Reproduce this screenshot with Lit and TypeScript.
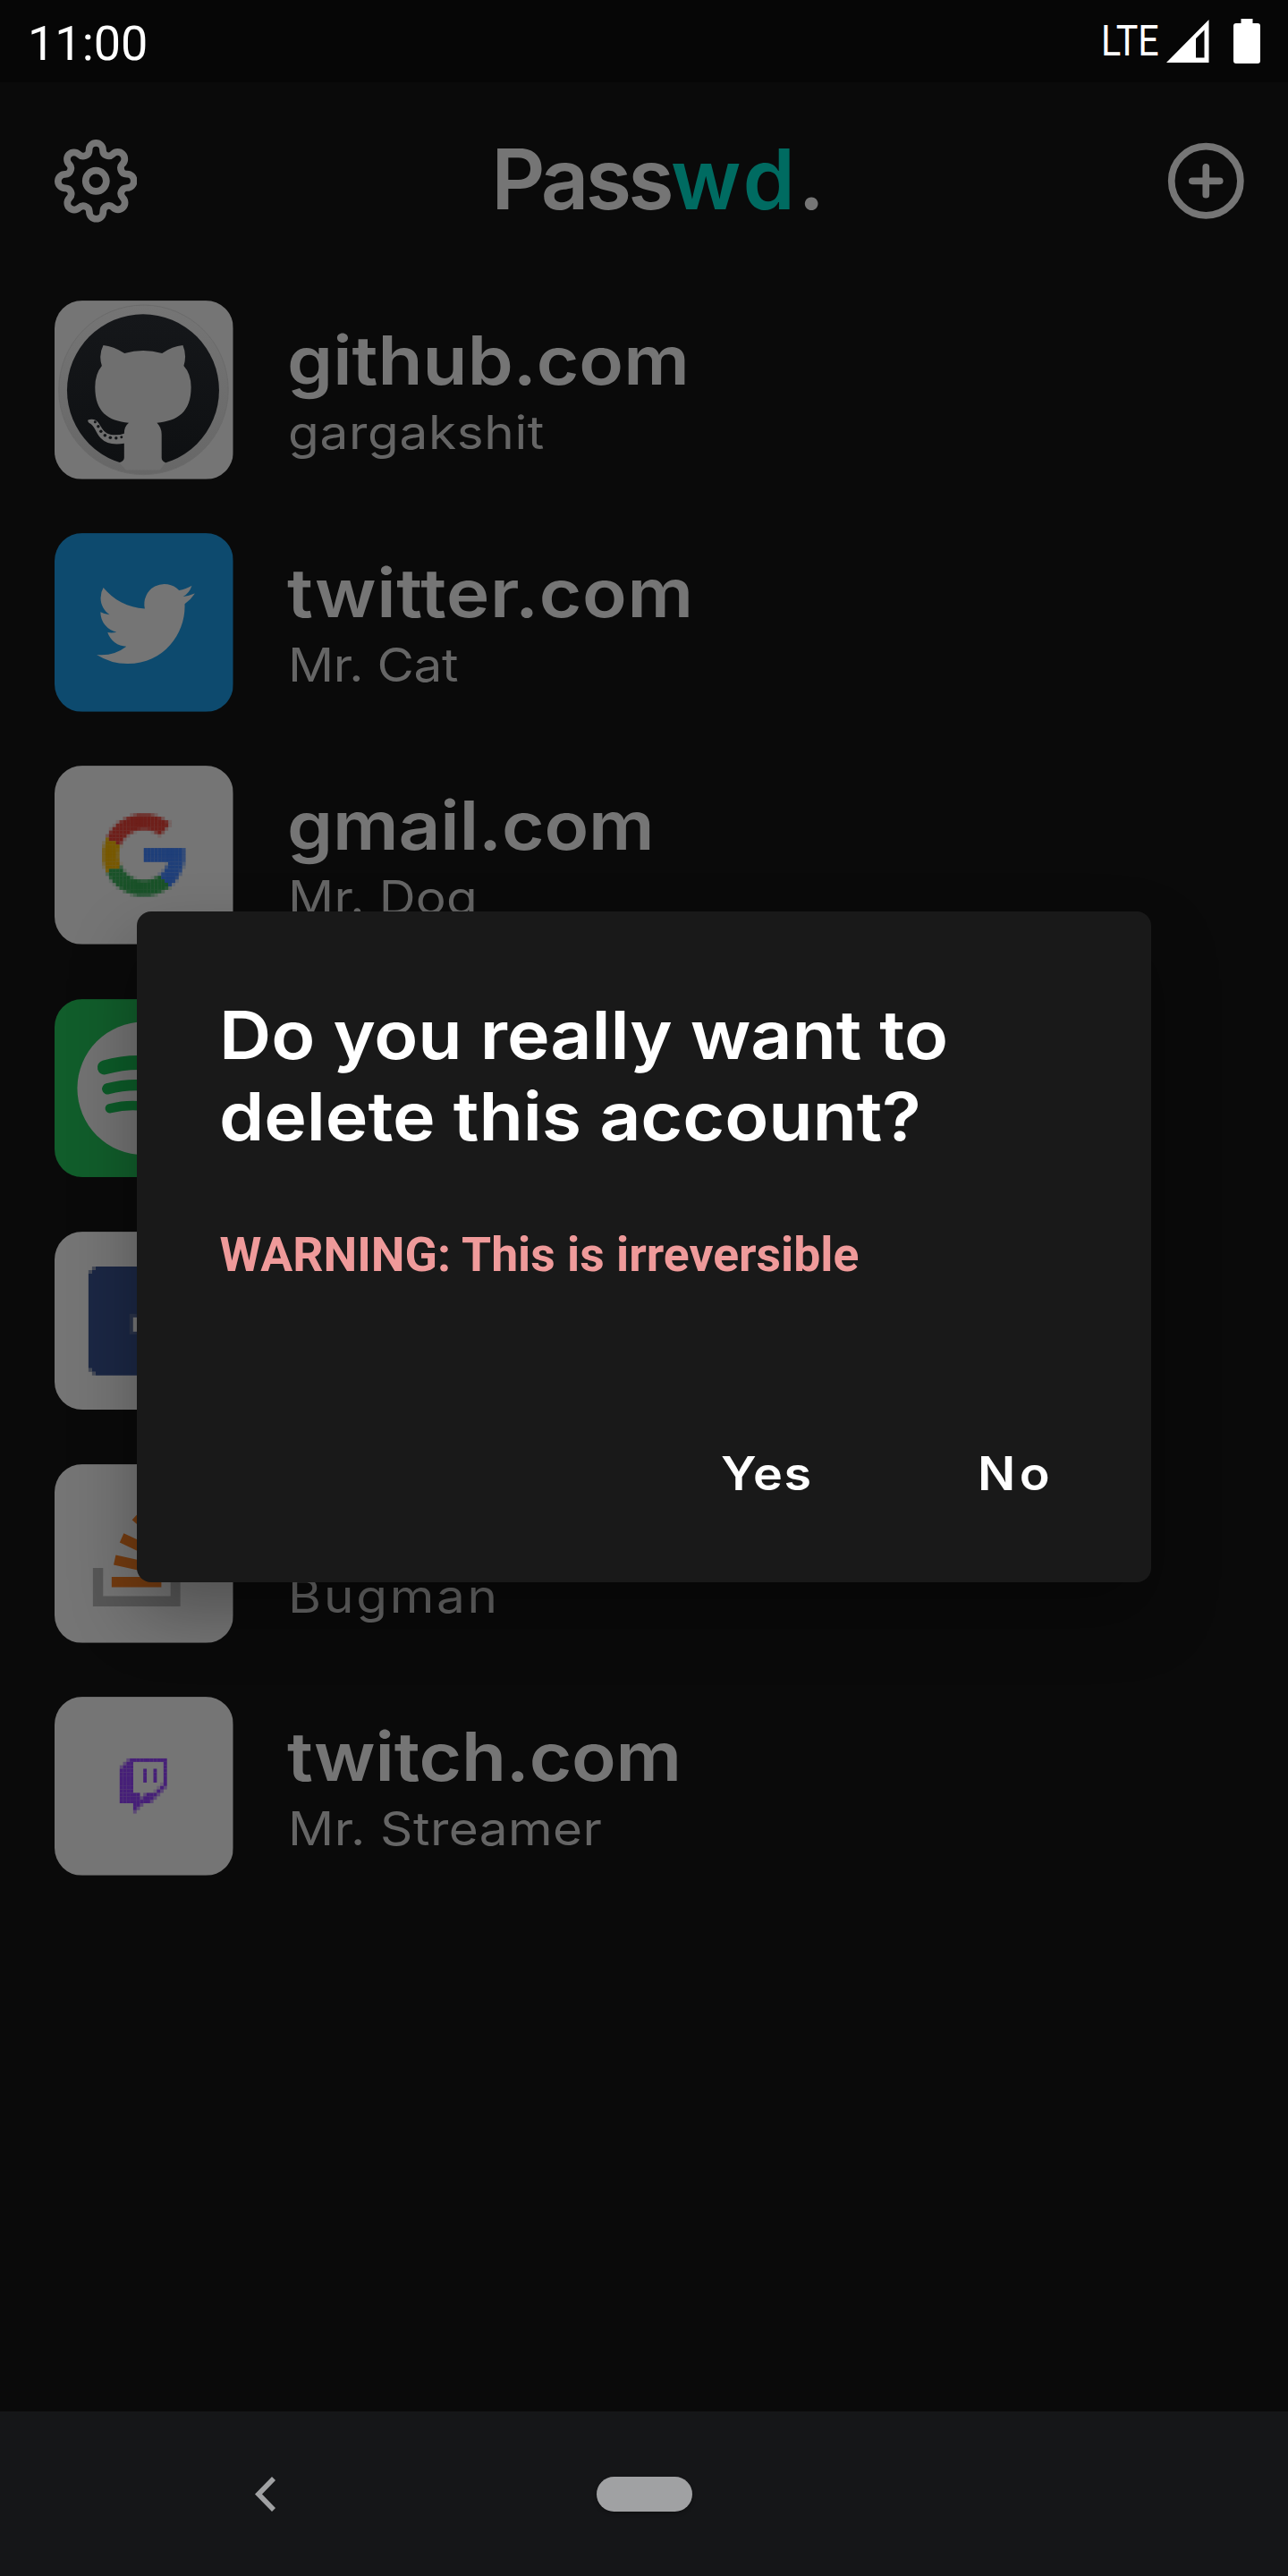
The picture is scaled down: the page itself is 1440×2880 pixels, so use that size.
import { LitElement, html, css, svg } from "lit";
import { customElement, property } from "lit/decorators.js";

interface Account {
  icon: string;
  site?: string;
  user?: string;
  siteTracking?: number;
  userTracking?: number;
}

const ACCOUNTS: Account[] = [
  { icon: "github", site: "github.com", user: "gargakshit", siteTracking: 0, userTracking: 0.6 },
  { icon: "twitter", site: "twitter.com", user: "Mr. Cat", siteTracking: 0.6, userTracking: -0.4 },
  { icon: "google", site: "gmail.com", user: "Mr. Dog", siteTracking: -0.1, userTracking: 0.1 },
  { icon: "spotify" },
  { icon: "facebook" },
  { icon: "stack", user: "Bugman", userTracking: 2.5 },
  { icon: "twitch", site: "twitch.com", user: "Mr. Streamer", siteTracking: -0.2, userTracking: 0.4 },
];

/** Which colour the Google "G" has at a point, with the mark centred on 0,0. */
function googleColour(x: number, y: number): string | null {
  const r = Math.hypot(x, y);
  if (x >= 0 && y >= -8 && y <= 8 && r <= 46) return "#1f3f79";
  if (r > 46 || r < 28.5) return null;
  const a = (Math.atan2(-y, x) * 180) / Math.PI;
  if (a >= 50 && a < 155) return "#6e1f1a";
  if (a >= 155 || a < -155) return "#775800";
  if (a < -52) return "#1a5229";
  if (a < 0) return "#1f3f79";
  return null;
}

/** Low-resolution favicon rendering of the G: one rect for each covered cell. */
function googlePixels() {
  const cell = 3.9;
  const cells = [];
  for (let row = -12; row < 12; row++) {
    for (let col = -12; col < 12; col++) {
      const hits = new Map<string, number>();
      let total = 0;
      for (let i = 0; i < 16; i++) {
        const c = googleColour((col + ((i % 4) + 0.5) / 4) * cell, (row + (Math.floor(i / 4) + 0.5) / 4) * cell);
        if (c) {
          hits.set(c, (hits.get(c) ?? 0) + 1);
          total++;
        }
      }
      if (!total) continue;
      const fill = [...hits.entries()].sort((a, b) => b[1] - a[1])[0][0];
      cells.push(svg`<rect x=${100 + col * cell} y=${100 + row * cell} width=${cell + 0.15} height=${cell + 0.15} fill=${fill} fill-opacity=${total / 16}></rect>`);
    }
  }
  return cells;
}

const TWITCH_BITMAP = [
  "..+###########",
  ".+##.........#",
  "+###.........#",
  "####...#..#..#",
  "####...#..#..#",
  "####...#..#..#",
  "####...#..#..#",
  "####........-#",
  "####.......-#+",
  "####......-#+.",
  "######.+###+..",
  "######+###+...",
  "#########+....",
  "....##+.......",
  "....#+........",
  "....+.........",
];

function twitchPixels() {
  const alpha: Record<string, number> = { "#": 1, "+": 0.5, "-": 0.25 };
  return TWITCH_BITMAP.flatMap((line, row) =>
    [...line].map((ch, col) =>
      alpha[ch]
        ? svg`<rect x=${73 + col * 3.78} y=${69 + row * 3.86} width="3.85" height="3.92" fill="#461f78" fill-opacity=${alpha[ch]}></rect>`
        : null
    )
  );
}

const LOGOS: Record<string, unknown> = {
  github: svg`
    <defs>
      <linearGradient id="gh" x1="0" y1="0" x2="0" y2="1">
        <stop offset="0" stop-color="#757575"></stop><stop offset="1" stop-color="#676767"></stop>
      </linearGradient>
      <linearGradient id="ink" x1="0" y1="0" x2="0" y2="1">
        <stop offset="0" stop-color="#15171a"></stop><stop offset="1" stop-color="#0e1012"></stop>
      </linearGradient>
    </defs>
    <rect width="200" height="200" fill="#757575"></rect>
    <circle cx="99.7" cy="100" r="95" fill="url(#gh)" stroke="#6a6a6a" stroke-width="1"></circle>
    <circle cx="99.2" cy="100.5" r="85.2" fill="url(#ink)"></circle>
    <path fill="#6f6f6f" d="M54.6 50Q66 51 78.4 59Q99.2 53 120.5 59Q132 51 143.8 50Q148.5 61 144.8 73Q153 82 153 97C153 125 138 135 114.7 137Q120 142 120 150V176Q120 180 124.500 181.500L118 190H80L72.500 181.500Q78 180 78 176V160Q60 163 51.700 154C46 148 45 140 38.500 137Q35 133 41 133C53 132 50 150 66 150.500Q73 151 78 149Q78 141 83.200 137C60 135 45.400 125 45.400 97Q45.400 82 53 73Q49 61 54.600 50Z"></path>
    <g fill="#131517">
      <circle cx="45.500" cy="136" r="1.500"></circle><circle cx="49" cy="141" r="1.700"></circle><circle cx="52" cy="146.500" r="1.700"></circle>
      <circle cx="56.500" cy="151" r="1.800"></circle><circle cx="62.500" cy="153.500" r="1.800"></circle><circle cx="69" cy="154" r="1.700"></circle><circle cx="75" cy="153" r="1.500"></circle>
    </g>`,
  twitter: svg`
    <rect width="200" height="200" fill="#0d4a6e"></rect>
    <path transform="translate(47.2 46.7) scale(4.58)" fill="#757575" d="M23.953 4.57a10 10 0 01-2.825.775 4.958 4.958 0 002.163-2.723c-.951.555-2.005.959-3.127 1.184a4.92 4.92 0 00-8.384 4.482C7.69 8.095 4.067 6.13 1.64 3.162a4.822 4.822 0 00-.666 2.475c0 1.71.87 3.213 2.188 4.096a4.904 4.904 0 01-2.228-.616v.06a4.923 4.923 0 003.946 4.827 4.996 4.996 0 01-2.212.085 4.936 4.936 0 004.604 3.417 9.867 9.867 0 01-6.102 2.105c-.39 0-.779-.023-1.17-.067a13.995 13.995 0 007.557 2.209c9.053 0 13.998-7.496 13.998-13.985 0-.21 0-.42-.015-.63A9.935 9.935 0 0024 4.59z"></path>`,
  google: svg`<rect width="200" height="200" fill="#757575"></rect>${googlePixels()}`,
  spotify: svg`
    <rect width="200" height="200" fill="#115d2b"></rect>
    <circle cx="100" cy="100" r="74.5" fill="#727272"></circle>
    <g fill="none" stroke="#0c5a28" stroke-linecap="round">
      <path d="M56 76.5Q80 69.5 106 71.5Q128 75 146 88" stroke-width="16"></path>
      <path d="M59.5 100.500Q82 94.500 104 97Q124 101 140 112" stroke-width="12.500"></path>
      <path d="M62 122.500Q82 117.500 100 120Q118 123 132 132" stroke-width="10.500"></path>
    </g>`,
  facebook: svg`
    <rect width="200" height="200" fill="#757575"></rect>
    <path d="M46 39H154V43H158V47H162V153H158V157H154V161H46V157H42V153H38V47H42V43H46Z" fill="#1b2744"></path>
    <path d="M42 39h4v4h-4zM38 43h4v4h-4zM38 153h4v4h-4zM42 157h4v4h-4z" fill="#454a57"></path>
    <rect x="84" y="92" width="8" height="23" fill="#2a3349"></rect>
    <rect x="88" y="96" width="60" height="16" fill="#757575"></rect>`,
  stack: svg`
    <rect width="200" height="200" fill="#757575"></rect>
    <path d="M43 116.3H54.4V147.7H130V116.3H141V159.3H43Z" fill="#575757"></path>
    <g fill="#733b10">
      <path d="M64 126.300H119.700V137.700H64Z"></path>
      <path d="M68.600 101.700L122 113.500L119.500 124.500L66.200 112.700Z"></path>
      <path d="M77.600 77.300L127 100.500L122 111L73 87.700Z"></path>
      <path d="M92 56.700L134 89L127 98L86.900 62.300Z"></path>
    </g>`,
  twitch: svg`<rect width="200" height="200" fill="#757575"></rect>${twitchPixels()}`,
};

@customElement("status-bar")
class StatusBar extends LitElement {
  static styles = css`
    :host { display: flex; flex: none; box-sizing: border-box; height: 92px; padding: 0 31px; background: #060606; color: #fff; justify-content: space-between; font-family: Roboto, sans-serif; }
    .time { font-size: 54px; line-height: 97px; }
    .right { display: flex; }
    .lte { width: 72px; font-size: 47.5px; line-height: 92px; transform: scaleX(0.867); transform-origin: 0 50%; white-space: nowrap; }
    svg { display: block; }
  `;
  render() {
    return html`
      <span class="time">11:00</span>
      <div class="right">
        <span class="lte">LTE</span>
        <svg width="106" height="92" viewBox="1303 0 106 92" fill="#fff">
          <path fill-rule="evenodd" d="M1304 70L1351.5 22V70ZM1337 43V64.5H1346.5V33.5Z"></path>
          <path d="M1387.5 21h13v5h5.5q3 0 3 3v39q0 3-3 3h-24q-3 0-3-3v-39q0-3 3-3h5.5z"></path>
        </svg>
      </div>`;
  }
}

@customElement("app-header")
class AppHeader extends LitElement {
  static styles = css`
    :host { display: flex; flex: none; box-sizing: border-box; height: 221px; padding: 0 45.5px 0 60.5px; align-items: center; justify-content: space-between; color: #757575; }
    svg { display: block; width: 92.6px; height: 92.6px; fill: none; stroke: currentColor; stroke-width: 2; stroke-linecap: round; stroke-linejoin: round; }
    h1 { margin: 0 0 4.5px 12.5px; font: 600 93.5px/112px Inter, sans-serif; letter-spacing: -3.8px; white-space: nowrap; }
    .accent { color: #006b61; letter-spacing: 3.5px; }
  `;
  render() {
    return html`
      <svg viewBox="0 0 24 24">
        <circle cx="12" cy="12" r="3"></circle>
        <path d="M19.4 15a1.65 1.65 0 0 0 .33 1.82l.06.06a2 2 0 0 1 0 2.83 2 2 0 0 1-2.83 0l-.06-.06a1.65 1.65 0 0 0-1.82-.33 1.65 1.65 0 0 0-1 1.51V21a2 2 0 0 1-2 2 2 2 0 0 1-2-2v-.09A1.65 1.65 0 0 0 9 19.4a1.65 1.65 0 0 0-1.82.33l-.06.06a2 2 0 0 1-2.83 0 2 2 0 0 1 0-2.83l.06-.06a1.65 1.65 0 0 0 .33-1.82 1.65 1.65 0 0 0-1.51-1H3a2 2 0 0 1-2-2 2 2 0 0 1 2-2h.09A1.65 1.65 0 0 0 4.6 9a1.65 1.65 0 0 0-.33-1.82l-.06-.06a2 2 0 0 1 0-2.83 2 2 0 0 1 2.83 0l.06.06a1.65 1.65 0 0 0 1.82.33H9a1.65 1.65 0 0 0 1-1.51V3a2 2 0 0 1 2-2 2 2 0 0 1 2 2v.09a1.65 1.65 0 0 0 1 1.51 1.65 1.65 0 0 0 1.82-.33l.06-.06a2 2 0 0 1 2.83 0 2 2 0 0 1 0 2.83l-.06.06a1.65 1.65 0 0 0-.33 1.82V9a1.65 1.65 0 0 0 1.51 1H21a2 2 0 0 1 2 2 2 2 0 0 1-2 2h-.09a1.65 1.65 0 0 0-1.51 1z"></path>
      </svg>
      <h1>Pass<span class="accent">wd</span>.</h1>
      <svg viewBox="0 0 24 24">
        <circle cx="12" cy="12" r="10"></circle>
        <path d="M12 8v8M8 12h8"></path>
      </svg>`;
  }
}

@customElement("account-row")
class AccountRow extends LitElement {
  @property({ attribute: false }) account!: Account;
  static styles = css`
    :host { display: flex; flex: none; height: 199.7px; font-family: Inter, sans-serif; }
    .tile { display: block; flex: none; width: 199.5px; height: 199.7px; border-radius: 31px; }
    .text { padding: 21.5px 0 0 60px; white-space: nowrap; transform: scaleX(1.09); transform-origin: 60px 0; }
    .site { height: 90px; font-weight: 600; font-size: 75px; line-height: 90px; color: #757575; }
    .user { margin: 4.5px 0 0 1px; font-size: 52px; line-height: 64px; color: #656565; }
  `;
  render() {
    const a = this.account;
    return html`
      <svg class="tile" viewBox="0 0 200 200">${LOGOS[a.icon]}</svg>
      <div class="text">
        <div class="site" style="letter-spacing:${a.siteTracking ?? 0}px">${a.site}</div>
        <div class="user" style="letter-spacing:${a.userTracking ?? 0}px">${a.user}</div>
      </div>`;
  }
}

@customElement("confirm-dialog")
class ConfirmDialog extends LitElement {
  static styles = css`
    :host { display: block; box-sizing: border-box; width: 1134px; height: 750px; padding: 92.5px 92px 0 92px; border-radius: 16px; background: #191919; box-shadow: 0 36px 76px rgba(0, 0, 0, 0.3); color: #fff; font-family: Inter, sans-serif; }
    .title { font-weight: 600; font-size: 74.5px; line-height: 91px; letter-spacing: -0.1px; white-space: nowrap; transform: scaleX(1.083); transform-origin: 0 0; }
    .warning { margin: 77px 0 0 0.5px; font: 700 53.5px/64px Roboto, sans-serif; color: #ef9a9a; white-space: nowrap; }
    .actions { display: flex; margin-top: 181.5px; padding-left: 561px; font-weight: 600; font-size: 52px; line-height: 64px; }
    .action { transform: scaleX(1.07); transform-origin: 0 0; }
    .yes { width: 287px; letter-spacing: 1.6px; }
    .no { letter-spacing: 4.2px; }
  `;
  render() {
    return html`
      <div class="title">Do you really want to<br>delete this account?</div>
      <div class="warning">WARNING: This is irreversible</div>
      <div class="actions"><span class="action yes">Yes</span><span class="action no">No</span></div>`;
  }
}

@customElement("nav-bar")
class NavBar extends LitElement {
  static styles = css`
    :host { display: flex; flex: none; height: 184px; align-items: center; background: #151618; }
    .back { margin-left: 285px; }
    .home { width: 107px; height: 39px; margin-left: 359px; border-radius: 20px; background: #a0a1a3; box-shadow: 0 2px 4px rgba(0, 0, 0, 0.3); }
  `;
  render() {
    return html`
      <svg class="back" width="23" height="39" viewBox="0 0 23 39" fill="#a0a1a3"><path d="M19 0L23 4L8 19.5L23 35L19 39L0 19.5Z"></path></svg>
      <div class="home"></div>`;
  }
}

@customElement("app-root")
class AppRoot extends LitElement {
  static styles = css`
    :host { display: flex; flex-direction: column; position: relative; width: 1440px; height: 2880px; overflow: hidden; background: #0a0a0a; }
    .list { flex: 1; display: flex; flex-direction: column; gap: 60.5px; padding: 23px 0 0 61px; }
    .dialog { position: absolute; left: 153px; top: 1019px; }
  `;
  render() {
    return html`
      <status-bar></status-bar>
      <app-header></app-header>
      <main class="list">${ACCOUNTS.map((a) => html`<account-row .account=${a}></account-row>`)}</main>
      <nav-bar></nav-bar>
      <confirm-dialog class="dialog"></confirm-dialog>`;
  }
}
